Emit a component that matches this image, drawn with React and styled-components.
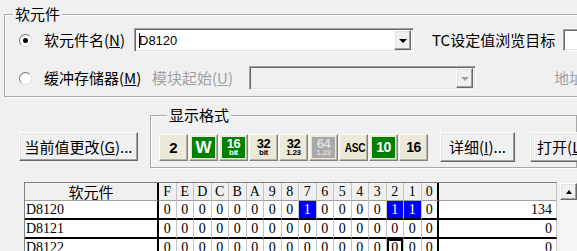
import React from 'react';
import styled, { createGlobalStyle, css } from 'styled-components';

const GlobalStyle = createGlobalStyle`
  html, body {
    margin: 0;
    padding: 0;
    background: #f0f0f0;
    overflow: hidden;
  }
  body {
    font-family: "Noto Sans CJK SC", "Liberation Sans", sans-serif;
    font-size: 15px;
    color: #000;
  }
  u {
    text-decoration: underline;
    text-underline-offset: 1px;
  }
`;

const Window = styled.div`
  width: 577px;
  height: 251px;
  overflow: hidden;
  padding-top: 5px;
  box-sizing: border-box;
`;

/* ---------Group boxes--------------- */
const GroupBox = styled.fieldset`
  margin: 0;
  min-width: 0;
  box-sizing: border-box;
  width: ${({ $w }) => $w}px;
  padding: ${({ $pad }) => $pad};
  border: 1px solid #a8a8a8;
  box-shadow: inset 1px 1px 0 #fff, 1px 1px 0 #fff;
`;
const Legend = styled.legend`
  margin-left: 8px;
  padding: 0 2px;
  background: #f0f0f0;
  font-size: 15px;
  line-height: ${({ $lh }) => $lh}px;
`;

/* ---------Device selection--------------- */
const DeviceGroup = styled(GroupBox)`
  margin-left: 4px;
`;
const OptionRow = styled.div`
  display: flex;
  align-items: center;
  height: 24px;
  padding-left: 15px;
  & + & {
    margin-top: 14px;
  }
`;
const Radio = styled.span`
  flex: none;
  width: 13px;
  height: 13px;
  box-sizing: border-box;
  border-radius: 50%;
  border: 1px solid;
  border-color: #7a7a7a #dcdcdc #dcdcdc #7a7a7a;
  background: #fff;
  display: flex;
  align-items: center;
  justify-content: center;
  margin: 0 12px 0 -1px;
  &::after {
    content: '';
    width: 5px;
    height: 5px;
    border-radius: 50%;
    background: ${({ $checked }) => ($checked ? '#000' : 'transparent')};
  }
`;
const FieldLabel = styled.span`
  flex: none;
  width: ${({ $w }) => ($w ? `${$w}px` : 'auto')};
  margin-left: ${({ $ml }) => $ml || 0}px;
  color: ${({ $disabled }) => ($disabled ? '#a0a0a0' : '#000')};
  line-height: 20px;
  white-space: nowrap;
`;
const sunken = css`
  border: 1px solid;
  border-color: #a0a0a0 #fff #fff #a0a0a0;
  box-shadow: inset 1px 1px 0 #696969, inset -1px -1px 0 #e3e3e3;
`;
const raised = css`
  border: 1px solid;
  border-color: #fff #696969 #696969 #fff;
  box-shadow: inset -1px -1px 0 #a0a0a0, inset 1px 1px 0 #e3e3e3;
`;
const Combo = styled.div`
  flex: none;
  box-sizing: border-box;
  width: ${({ $w }) => $w}px;
  height: 24px;
  padding: 2px;
  display: flex;
  align-items: center;
  ${sunken}
  background: ${({ $disabled }) => ($disabled ? '#f0f0f0' : '#fff')};
`;
const ComboText = styled.span`
  flex: 1;
  display: flex;
  align-items: center;
  padding-left: 2px;
  font: 13px "Liberation Sans", sans-serif;
`;
const Caret = styled.span`
  width: 1px;
  height: 15px;
  background: #000;
  margin-right: -1px;
`;
const DropButton = styled.span`
  flex: none;
  width: 17px;
  height: 20px;
  box-sizing: border-box;
  ${raised}
  background: #f0f0f0;
  display: flex;
  align-items: center;
  justify-content: center;
  &::after {
    content: '';
    border-left: 4px solid transparent;
    border-right: 4px solid transparent;
    border-top: 4px solid ${({ $disabled }) => ($disabled ? '#a0a0a0' : '#000')};
    margin-top: 1px;
  }
`;
const EditBox = styled.div`
  flex: none;
  width: 60px;
  height: 22px;
  box-sizing: border-box;
  ${sunken}
  background: #fff;
`;

/* ---------Buttons & display format--------------- */
const ControlRow = styled.div`
  display: flex;
  align-items: flex-start;
  margin-top: 7px;
`;
const CmdButton = styled.button`
  flex: none;
  box-sizing: border-box;
  width: ${({ $w }) => $w}px;
  height: ${({ $h }) => $h || 30}px;
  margin: ${({ $m }) => $m || 0};
  padding: 0;
  ${raised}
  background: #f0f0f0;
  font: inherit;
  font-size: 15px;
  line-height: 20px;
  color: #000;
  white-space: nowrap;
  overflow: hidden;
`;
const FormatGroup = styled(GroupBox)`
  margin-left: 12px;
`;
const FormatBar = styled.div`
  display: flex;
  align-items: center;
  height: 30px;
`;
const FormatButton = styled.span`
  flex: none;
  box-sizing: border-box;
  width: 29px;
  height: 27px;
  margin-right: 1px;
  padding: 2px;
  border: 1px solid;
  border-color: #fff #808080 #808080 #fff;
  box-shadow: inset -1px -1px 0 #b8b5a6;
  background: #ece9d8;
  display: flex;
`;
const faces = {
  plain: css`background: transparent; color: #000;`,
  on: css`background: #008000; color: #fff;`,
  off: css`background: #a8a8a8; color: #dedede;`,
};
const Face = styled.span`
  flex: 1;
  display: flex;
  flex-direction: column;
  align-items: center;
  justify-content: center;
  font-family: "Liberation Sans", sans-serif;
  font-weight: bold;
  line-height: 1;
  ${({ $tone }) => faces[$tone || 'plain']}
`;
const Big = styled.span`
  font-size: ${({ $size }) => $size || 15}px;
  line-height: ${({ $size }) => ($size ? $size - 2 : 15)}px;
  letter-spacing: ${({ $ls }) => $ls || 0}px;
`;
const Tiny = styled.span`
  font-size: 8px;
  line-height: 8px;
  letter-spacing: -0.3px;
`;
const Narrow = styled.span`
  font-size: 13px;
  transform: scaleX(0.78);
  letter-spacing: -0.5px;
`;

/* ---------Bit table--------------- */
const TableArea = styled.div`
  display: flex;
  align-items: flex-start;
  margin: 14px 0 0 24px;
`;
const Grid = styled.div`
  flex: none;
  display: grid;
  grid-template-columns: 134px repeat(16, 17.5px) 118px;
  grid-template-rows: 18px repeat(3, 19px);
  border-left: 1px solid #808080;
  border-top: 1px solid #808080;
  font: 14px "Liberation Serif", serif;
`;
const Cell = styled.div`
  box-sizing: border-box;
  display: flex;
  align-items: center;
  justify-content: ${({ $align }) => $align || 'center'};
  padding: ${({ $pad }) => $pad || 0};
  overflow: hidden;
  white-space: nowrap;
  background: ${({ $head, $on }) => ($on ? '#0000ff' : $head ? '#f0f0f0' : '#fff')};
  color: ${({ $on }) => ($on ? '#fff' : '#000')};
  border-right: ${({ $edge }) => ($edge ? '2px solid #000' : '1px solid #c4c4c4')};
  border-bottom: ${({ $head }) => ($head ? '1px solid #a0a0a0' : '2px solid #000')};
  ${({ $focus }) => $focus && css`box-shadow: inset 0 0 0 2px #000;`}
`;
const HeadText = styled.span`
  font-family: "Noto Sans CJK SC", sans-serif;
  font-size: 15px;
  line-height: 16px;
`;
const ScrollBar = styled.div`
  flex: none;
  width: 17px;
  height: 80px;
  margin: 1px 0 0 3px;
  background: #f4f4f4;
`;
const ScrollUp = styled.div`
  height: 17px;
  box-sizing: border-box;
  ${raised}
  background: #f0f0f0;
  display: flex;
  align-items: center;
  justify-content: center;
  &::after {
    content: '';
    border-left: 3px solid transparent;
    border-right: 3px solid transparent;
    border-bottom: 4px solid #000;
  }
`;

const BITS = ['F', 'E', 'D', 'C', 'B', 'A', '9', '8', '7', '6', '5', '4', '3', '2', '1', '0'];
const ROWS = [
  { name: 'D8120', value: 134 },
  { name: 'D8121', value: 0 },
  { name: 'D8122', value: 0 },
];
const FOCUS = { row: 2, bit: 13 };

function bitsOf(value) {
  return value.toString(2).padStart(16, '0').split('');
}

const FORMATS = [
  { key: '2', tone: 'plain', body: <Big>2</Big> },
  { key: 'W', tone: 'on', body: <Big $size={17}>W</Big> },
  { key: '16b', tone: 'on', body: (<><Big $size={13} $ls={-0.5}>16</Big><Tiny>bit</Tiny></>) },
  { key: '32b', tone: 'plain', body: (<><Big $size={13} $ls={-0.5}>32</Big><Tiny>bit</Tiny></>) },
  { key: '32f', tone: 'plain', body: (<><Big $size={13} $ls={-0.5}>32</Big><Tiny>1.23</Tiny></>) },
  { key: '64f', tone: 'off', body: (<><Big $size={13} $ls={-0.5}>64</Big><Tiny>1.23</Tiny></>) },
  { key: 'asc', tone: 'plain', body: <Narrow>ASC</Narrow> },
  { key: '10', tone: 'on', body: <Big $size={14} $ls={-0.5}>10</Big> },
  { key: '16', tone: 'plain', body: <Big $size={14} $ls={-0.5}>16</Big> },
];

export default function App() {
  return (
    <Window>
      <GlobalStyle />
      <DeviceGroup $w={700} $pad="5px 0 6px 0">
        <Legend $lh={18}>软元件</Legend>
        <OptionRow>
          <Radio $checked />
          <FieldLabel $w={90}>软元件名(<u>N</u>)</FieldLabel>
          <Combo $w={280}>
            <ComboText>
              <Caret />
              D8120
            </ComboText>
            <DropButton />
          </Combo>
          <FieldLabel $w={131} $ml={18}>TC设定值浏览目标</FieldLabel>
          <EditBox />
        </OptionRow>
        <OptionRow>
          <Radio />
          <FieldLabel $w={108}>缓冲存储器(<u>M</u>)</FieldLabel>
          <FieldLabel $w={97} $disabled>模块起始(<u>U</u>)</FieldLabel>
          <Combo $w={227} $disabled>
            <ComboText />
            <DropButton $disabled />
          </Combo>
          <FieldLabel $ml={78} $disabled>地址</FieldLabel>
        </OptionRow>
      </DeviceGroup>

      <ControlRow>
        <CmdButton $w={119} $h={29} $m="28px 0 0 19px">
          当前值更改(<u>G</u>)...
        </CmdButton>
        <FormatGroup $w={560} $pad="6px 0 5px 8px">
          <Legend $lh={22}>显示格式</Legend>
          <FormatBar>
            {FORMATS.map((f) => (
              <FormatButton key={f.key}>
                <Face $tone={f.tone}>{f.body}</Face>
              </FormatButton>
            ))}
            <CmdButton $w={75} $m="0 0 0 11px">详细(<u>I</u>)...</CmdButton>
            <CmdButton $w={75} $m="0 0 0 15px">打开(<u>L</u>)...</CmdButton>
          </FormatBar>
        </FormatGroup>
      </ControlRow>

      <TableArea>
        <Grid>
          <Cell $head $edge><HeadText>软元件</HeadText></Cell>
          {BITS.map((b, i) => (
            <Cell key={b} $head $edge={i === 15}>{b}</Cell>
          ))}
          <Cell $head />
          {ROWS.map((row, r) => (
            <React.Fragment key={row.name}>
              <Cell $edge $align="flex-start" $pad="0 0 0 1px">{row.name}</Cell>
              {bitsOf(row.value).map((v, i) => (
                <Cell
                  key={i}
                  $edge={i === 15}
                  $on={v === '1'}
                  $focus={FOCUS.row === r && FOCUS.bit === i}
                >
                  {v}
                </Cell>
              ))}
              <Cell $align="flex-end" $pad="0 4px 0 0">{row.value}</Cell>
            </React.Fragment>
          ))}
        </Grid>
        <ScrollBar>
          <ScrollUp />
        </ScrollBar>
      </TableArea>
    </Window>
  );
}
